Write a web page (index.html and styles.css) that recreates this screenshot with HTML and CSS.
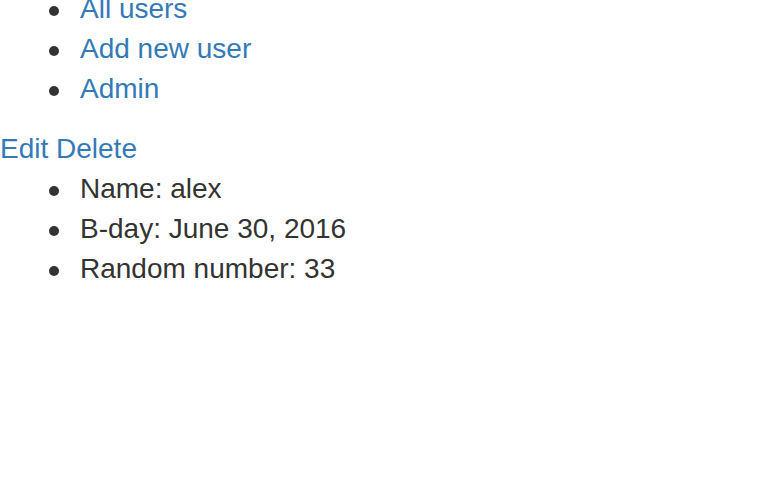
FILE: index.html
```html
<!DOCTYPE html>
<html>
<head>
<meta charset="utf-8">
<link rel="stylesheet" href="styles.css">
</head>
<body>
<div class="page">
  <ul class="nav">
    <li><a href="#">All users</a></li>
    <li><a href="#">Add new user</a></li>
    <li><a href="#">Admin</a></li>
  </ul>
  <div class="actions"><a href="#">Edit</a> <a href="#">Delete</a></div>
  <ul class="details">
    <li>Name: alex</li>
    <li>B-day: June 30, 2016</li>
    <li>Random number: 33</li>
  </ul>
</div>
</body>
</html>
```
FILE: styles.css
```css
html, body {
  margin: 0;
  padding: 0;
  background: #fff;
}
body {
  font-family: "Liberation Sans", Arial, Helvetica, sans-serif;
  font-size: 28px;
  line-height: 40px;
  color: #333;
}
.page {
  margin-top: -11px;
}
a {
  color: #337ab7;
  text-decoration: none;
}
ul {
  margin: 0 0 20px 0;
  padding-left: 80px;
  list-style: none;
}
li::before {
  content: "";
  display: inline-block;
  width: 10px;
  height: 10px;
  border-radius: 50%;
  background: #333;
  margin-left: -31px;
  margin-right: 21px;
  vertical-align: middle;
}
```
